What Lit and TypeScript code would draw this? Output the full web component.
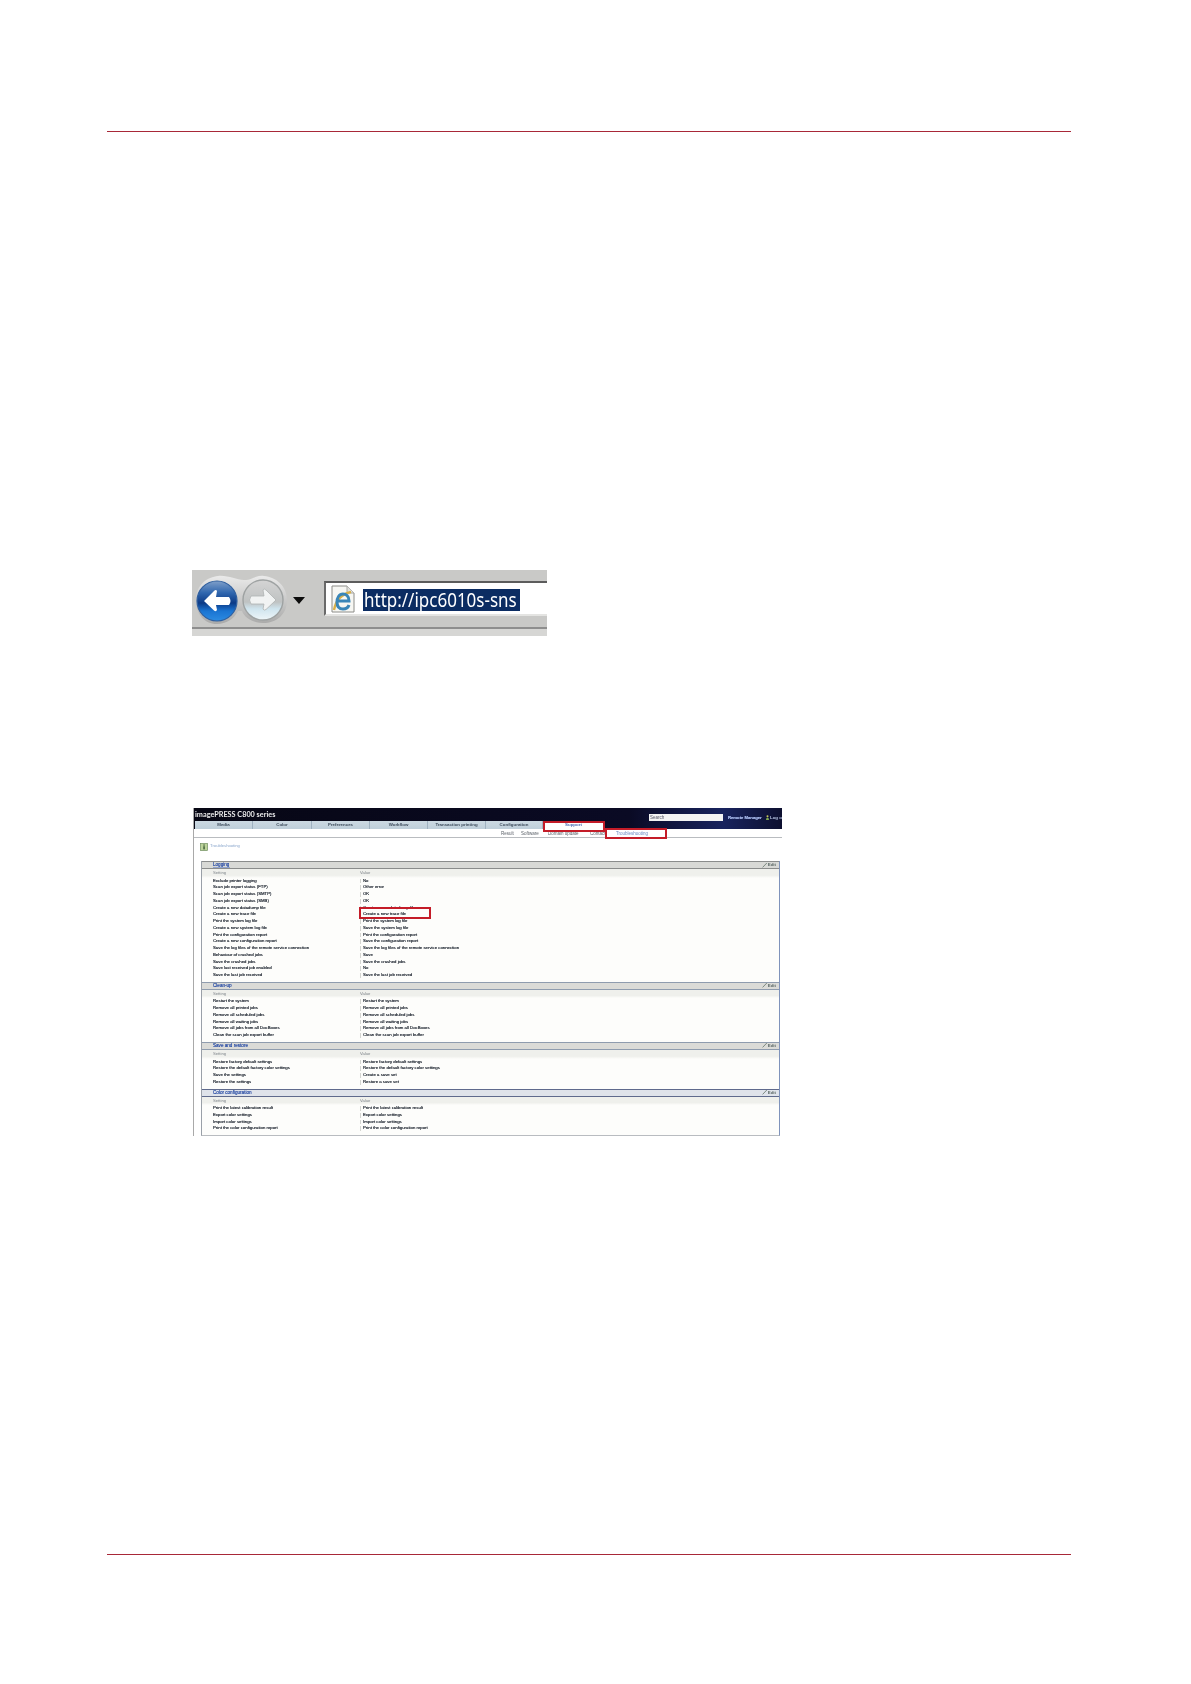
import { LitElement, html, css, svg } from "lit";
import { customElement } from "lit/decorators.js";

type Section = { title: string; rows: [string, string][]; cls: string };

const same = (s: string): [string, string] => [s, s];

const SECTIONS: Section[] = [
  {
    title: "Logging",
    cls: "gray",
    rows: [
      ["Exclude printer logging", "No"],
      ["Scan job export status (FTP)", "Other error"],
      ["Scan job export status (SMTP)", "OK"],
      ["Scan job export status (SMB)", "OK"],
      same("Create a new datadump file"),
      same("Create a new trace file"),
      same("Print the system log file"),
      ["Create a new system log file", "Save the system log file"],
      same("Print the configuration report"),
      ["Create a new configuration report", "Save the configuration report"],
      same("Save the log files of the remote service connection"),
      ["Behaviour of crashed jobs", "Save"],
      same("Save the crashed jobs"),
      ["Save last received job enabled", "No"],
      same("Save the last job received"),
    ],
  },
  {
    title: "Clean-up",
    cls: "slate",
    rows: [
      same("Restart the system"),
      same("Remove all printed jobs"),
      same("Remove all scheduled jobs"),
      same("Remove all waiting jobs"),
      same("Remove all jobs from all DocBoxes"),
      same("Clean the scan job export buffer"),
    ],
  },
  {
    title: "Save and restore",
    cls: "slate",
    rows: [
      same("Restore factory default settings"),
      same("Restore the default factory color settings"),
      ["Save the settings", "Create a save set"],
      ["Restore the settings", "Restore a save set"],
    ],
  },
  {
    title: "Color configuration",
    cls: "navy",
    rows: [
      same("Print the latest calibration result"),
      same("Export color settings"),
      same("Import color settings"),
      same("Print the color configuration report"),
    ],
  },
];

const TABS = ["Media", "Color", "Preferences", "Workflow", "Transaction printing", "Configuration", "Support"];
const SUB = ["Result", "Software", "Domain update", "Contact", "Troubleshooting"];

const navButtons = svg`
  <svg class="nav" width="132" height="57" viewBox="0 0 132 57">
    <defs>
      <linearGradient id="bk" x1="0" y1="0" x2="0" y2="1">
        <stop offset="0" stop-color="#7f9fc9"/>
        <stop offset=".3" stop-color="#2f66ae"/>
        <stop offset=".55" stop-color="#0c3a86"/>
        <stop offset=".75" stop-color="#1a74d2"/>
        <stop offset="1" stop-color="#2c8ce2"/>
      </linearGradient>
      <linearGradient id="fw" x1="0" y1="0" x2="0" y2="1">
        <stop offset="0" stop-color="#d4d4d4"/>
        <stop offset=".55" stop-color="#bfc2c2"/>
        <stop offset=".72" stop-color="#cfe4ee"/>
        <stop offset="1" stop-color="#eef6f9"/>
      </linearGradient>
      <linearGradient id="hood" x1="0" y1="0" x2="0" y2="1">
        <stop offset="0" stop-color="#f2f2f2"/>
        <stop offset="1" stop-color="#a2a2a2"/>
      </linearGradient>
    </defs>
    <path d="M4 30 C4 14 16 7 26 6 C36 5 44 10 52 10 C60 10 64 5 72 6 C84 7 95 16 95 30 C95 45 84 53 71 53 C60 53 52 47 50 41 L46 41 C42 49 34 54 25 54 C12 54 4 44 4 30 Z" fill="url(#hood)" opacity=".8"/>
    <circle cx="25" cy="31" r="20" fill="url(#bk)" stroke="#31609f" stroke-width="1.2"/>
    <path d="M37 27 H24 L25 21 Q24 19 22 21 L12 31 L22 40.5 Q24 42 25 40 L24 35 H37 Q40 31 37 27 Z" fill="#fff"/>
    <circle cx="71" cy="30" r="20" fill="url(#fw)" stroke="#9ea2a2" stroke-width="1.4"/>
    <path d="M59 26 H72 L71 20 Q72 18 74 20 L84 30 L74 39.5 Q72 41 71 39 L72 34 H59 Q56 30 59 26 Z" fill="#f1f3f3" stroke="#aeb2b2" stroke-width=".8"/>
    <path d="M101 27 H113 L107 34 Z" fill="#0c0c0c"/>
  </svg>
`;

const pageIcon = svg`
  <svg class="page" width="24" height="28" viewBox="0 0 24 28">
    <path d="M1 1 H16 L23 8 V27 H1 Z" fill="#f7f7f3" stroke="#8c8c88" stroke-width="1"/>
    <path d="M16 1 V8 H23" fill="#e2e2de" stroke="#a8a8a4" stroke-width="1"/>
    <path d="M3 25 C5 15 10 9 20 7" fill="none" stroke="#d8b04a" stroke-width="2.4"/>
    <path d="M7 16 H18 C18 11 15 9 12 9 C8 9 6 13 6 17 C6 22 8 24 12 24 C15 24 17 23 18 20" fill="none" stroke="#3a86b8" stroke-width="3"/>
  </svg>
`;

const infoIcon = svg`
  <svg width="8" height="8" viewBox="0 0 8 8">
    <rect x=".5" y=".5" width="7" height="7" fill="#bcd39a" stroke="#6f8f5f" stroke-width=".7"/>
    <rect x="3.4" y="3.2" width="1.3" height="3.2" fill="#2f4f2a"/>
    <rect x="3.4" y="1.5" width="1.3" height="1.1" fill="#2f4f2a"/>
  </svg>
`;

const pencil = svg`
  <svg width="6" height="6" viewBox="0 0 6 6">
    <path d="M.6 5.4 L4.8 1" stroke="#7c8a82" stroke-width="1" fill="none"/>
  </svg>
`;

const userIcon = svg`
  <svg class="user" width="3" height="5" viewBox="0 0 3 5">
    <circle cx="1.5" cy="1.2" r="1" fill="#c9c95a"/>
    <path d="M0 5 Q0 2.4 1.5 2.4 Q3 2.4 3 5 Z" fill="#7fa84f"/>
  </svg>
`;

@customElement("app-root")
export class AppRoot extends LitElement {
  static styles = css`
    :host {
      display: flex;
      flex-direction: column;
      height: 1684px;
      box-sizing: border-box;
      padding: 131px 120px 0 107px;
      background: #fff;
      font-family: "Liberation Sans", Arial, sans-serif;
    }
    .rule { height: 1px; background: #a82838; flex: none; }
    .rule.foot { margin-top: 418px; }

    /* browser toolbar */
    .toolbar {
      margin: 438px 0 0 85px;
      width: 355px;
      height: 66px;
      flex: none;
      display: flex;
      flex-direction: column;
      background: #c9c9c7;
      filter: blur(.7px);
    }
    .tb-main { height: 57px; display: flex; align-items: flex-start; }
    .nav { display: block; flex: none; }
    .address {
      margin-top: 11px;
      flex: 1;
      height: 35px;
      box-sizing: border-box;
      border-top: 2px solid #5c5c5c;
      border-left: 2px solid #6a6a6a;
      border-bottom: 2px solid #e4e4e2;
      background: #fff;
      display: flex;
      align-items: center;
      padding-left: 5px;
      gap: 8px;
    }
    .page { flex: none; }
    .url {
      background: #0b2c62;
      color: #fff;
      height: 22px;
      width: 157px;
      flex: none;
      margin-top: 2px;
      display: flex;
    }
    .url span {
      display: block;
      font: 17px/22px "Noto Sans", sans-serif;
      white-space: nowrap;
      transform: scaleY(1.12);
      padding-left: 1px;
    }
    .tb-line { height: 2px; background: #8e8e8e; }
    .tb-low { flex: 1; background: #d6d6d4; }

    /* printer web UI screenshot */
    .shot {
      position: relative;
      margin: 172px 0 0 86px;
      width: 589px;
      height: 328px;
      flex: none;
      box-sizing: border-box;
      border-left: 1px solid #a9a9a9;
      background: #fff;
      overflow: hidden;
    }
    .inner { filter: blur(.45px); }
    .head {
      height: 21px;
      background: linear-gradient(90deg, #070714 0, #0a0a24 74%, #18235e 90%, #0d1030 100%);
      display: flex;
      flex-direction: column;
    }
    .head-top {
      height: 13px;
      display: flex;
      align-items: flex-end;
      padding-left: 1px;
    }
    .title-box { width: 454px; flex: none; }
    .title {
      display: inline-block;
      color: #ececec;
      font: bold 8px/13px "Lato", sans-serif;
      white-space: nowrap;
      transform: scaleX(.91);
      transform-origin: left center;
    }
    .search {
      width: 74px;
      height: 7px;
      box-sizing: border-box;
      background: #f4f4f4;
      color: #556;
      font-size: 4.5px;
      line-height: 7px;
      padding-left: 1px;
      flex: none;
    }
    .manager { color: #a4b6e8; font: bold 4.2px/7px "Liberation Sans", sans-serif; margin-left: 5px; white-space: nowrap; width: 38px; flex: none; text-shadow: 0 0 .5px #a4b6e8; }
    .logon { color: #b9c6e4; font: bold 4.4px/7px "Liberation Sans", sans-serif; white-space: nowrap; display: flex; align-items: center; gap: 1px; }
    .user { flex: none; }
    .tabs {
      height: 8px;
      display: grid;
      grid-template-columns: 58px 59px 58px 58px 58px 57px 61px;
      padding-left: 1px;
    }
    .tab {
      background: linear-gradient(#ccd9e2, #bfcfda);
      border-right: 1px solid #9fb1c0;
      color: #3c4a5a;
      font: bold 4.4px/8px "Liberation Sans", sans-serif;
      text-align: center;
    }
    .tab.on { background: #fff; color: #4a6ab0; border: 0; }
    .sub {
      height: 9px;
      box-sizing: border-box;
      border-bottom: 1px solid #b9bcc0;
      display: grid;
      grid-template-columns: 20px 27px 42px 26px auto;
      justify-content: start;
      padding-left: 307px;
      font-size: 4.5px;
      line-height: 9px;
      color: #5c626a;
    }
    .sub .on { color: #6a8ac4; }
    .crumb {
      height: 23px;
      display: flex;
      align-items: flex-start;
      gap: 2px;
      padding: 5px 0 0 6px;
      box-sizing: border-box;
      color: #8aa6cc;
      font-size: 4.2px;
      line-height: 5px;
    }
    .panel {
      margin-left: 7px;
      width: 579px;
      box-sizing: border-box;
      border-left: 1px solid #9aa0a8;
      border-right: 1px solid #7f93bb;
      border-bottom: 1px solid #b9bcc0;
      background: #fdfdfb;
    }
    .sec-head {
      height: 8px;
      box-sizing: border-box;
      display: flex;
      justify-content: space-between;
      align-items: center;
      padding: 0 3px 1px 11px;
      font-size: 4.6px;
      line-height: 5px;
      border-top: 1px solid;
      border-bottom: 1px solid;
    }
    .gray { background: #d8d9d6; border-color: #8a8c8c; }
    .slate { background: #dbdbd7; border-color: #8f9cae; }
    .navy { background: #dfe3ea; border-color: #5f6a8c; }
    .sec-title { color: #2f52a8; white-space: nowrap; text-shadow: 0 0 .5px #2f52a8; }
    .gray .sec-title { text-decoration: underline; text-decoration-color: #8fa2cf; }
    .edit { color: #5d6a68; font-weight: bold; font-size: 4.4px; display: flex; align-items: center; }
    .labels {
      height: 8.6px;
      background: linear-gradient(#eff0ec 70%, #fdfdfb);
      display: grid;
      grid-template-columns: 147px 1fr;
      padding-left: 11px;
      color: #7f858b;
      font-size: 4.2px;
      line-height: 8px;
    }
    .rows { padding: 0 0 3px 11px; }
    .row {
      display: grid;
      grid-template-columns: 147px 1fr;
      height: 6.75px;
      line-height: 6.75px;
      font-size: 4.3px;
      color: #2a313b;
      text-shadow: 0 0 .6px #2a313b;
      white-space: nowrap;
    }
    .val { padding-left: 3px; position: relative; }
    .val::before {
      content: "";
      position: absolute;
      left: 0;
      top: 1px;
      bottom: 1px;
      width: 1px;
      background: #d4d5d1;
    }
    .mark {
      position: absolute;
      box-sizing: border-box;
      border: 2px solid #c41c28;
    }
    .mark.support { left: 349px; top: 13px; width: 62px; height: 11px; }
    .mark.trouble { left: 411px; top: 20px; width: 62px; height: 11px; }
    .mark.trace { left: 165px; top: 99px; width: 72px; height: 12px; }
  `;

  render() {
    return html`
      <div class="rule"></div>
      <div class="toolbar">
        <div class="tb-main">
          ${navButtons}
          <div class="address">
            ${pageIcon}
            <div class="url"><span>http://ipc6010s-sns</span></div>
          </div>
        </div>
        <div class="tb-line"></div>
        <div class="tb-low"></div>
      </div>
      <div class="shot">
        <div class="inner">
          <div class="head">
            <div class="head-top">
              <div class="title-box"><span class="title">imagePRESS C800 series</span></div>
              <div class="search">Search</div>
              <div class="manager">Remote Manager</div>
              <div class="logon">${userIcon}<span>Log on</span></div>
            </div>
            <div class="tabs">
              ${TABS.map((t) => html`<div class="tab ${t === "Support" ? "on" : ""}">${t}</div>`)}
            </div>
          </div>
          <div class="sub">
            ${SUB.map((t) => html`<span class="${t === "Troubleshooting" ? "on" : ""}">${t}</span>`)}
          </div>
          <div class="crumb">${infoIcon}<span>Troubleshooting</span></div>
          <div class="panel">
            ${SECTIONS.map(
              (s) => html`
                <div class="sec-head ${s.cls}">
                  <span class="sec-title">${s.title}</span>
                  <span class="edit">${pencil}Edit</span>
                </div>
                <div class="labels"><span>Setting</span><span>Value</span></div>
                <div class="rows">
                  ${s.rows.map(
                    ([a, b]) => html`<div class="row"><span>${a}</span><span class="val">${b}</span></div>`
                  )}
                </div>
              `
            )}
          </div>
        </div>
        <div class="mark support"></div>
        <div class="mark trouble"></div>
        <div class="mark trace"></div>
      </div>
      <div class="rule foot"></div>
    `;
  }
}
